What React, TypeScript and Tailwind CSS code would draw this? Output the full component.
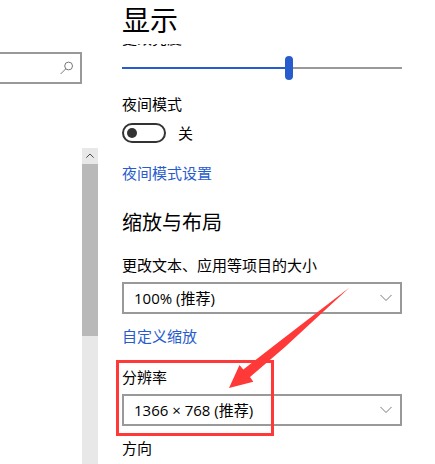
import { useState } from "react";

type SelectFieldProps = {
  id: string;
  label: string;
  options: string[];
  highlighted?: boolean;
};

function SelectField({ id, label, options, highlighted }: SelectFieldProps) {
  return (
    <div className="relative">
      <label htmlFor={id} className="block">
        {label}
      </label>
      <div className="relative mt-[7px]">
        <select
          id={id}
          className="block h-8 w-full appearance-none border-2 border-[#999999] bg-white pl-2.5 pr-8 text-[15px] text-black outline-none"
        >
          {options.map((option) => (
            <option key={option}>{option}</option>
          ))}
        </select>
        <svg
          className="pointer-events-none absolute right-2.5 top-3 h-2 w-3"
          viewBox="0 0 12 8"
          fill="none"
          stroke="#7a7a7a"
        >
          <path d="M0.4 0.9 L6 6.5 L11.6 0.9" />
        </svg>
      </div>
      {highlighted && (
        <>
          <div className="pointer-events-none absolute -bottom-2.5 -left-1.5 -top-[7px] w-[158px] border-[3px] border-[#ff3838]" />
          <svg
            className="pointer-events-none absolute -top-20 left-[107px] h-[102px] w-[122px]"
            viewBox="0 0 122 102"
            fill="#ff3838"
          >
            <path d="M0 101 L10.5 78 L14.3 82.6 L51 54 L120.5 0.6 L56 60 L21 90 L24.3 94.7 Z" />
          </svg>
        </>
      )}
    </div>
  );
}

export default function App() {
  const [brightness, setBrightness] = useState(60);
  const [nightMode, setNightMode] = useState(false);

  return (
    <div className="flex h-screen overflow-hidden bg-white font-['Open_Sans','Noto_Sans_CJK_SC',sans-serif] text-[15px] leading-5 text-black">
      {/* 侧边栏 */}
      <aside className="flex w-[98px] shrink-0 flex-col">
        <div className="relative mr-4 mt-[52px]">
          <input
            type="text"
            aria-label="查找设置"
            className="block h-8 w-full border-2 border-l-0 border-[#999999] bg-white pl-2 pr-6 outline-none"
          />
          <svg
            className="pointer-events-none absolute right-2 top-2 h-4 w-4"
            viewBox="0 0 16 16"
            fill="none"
            stroke="#777777"
          >
            <circle cx="10.6" cy="6" r="3.9" />
            <path d="M7.8 8.8 L2.6 14" />
          </svg>
        </div>

        {/* 滚动条 */}
        <div className="mt-16 flex w-4 grow flex-col self-end bg-[#e8e8e8]">
          <button type="button" aria-label="向上滚动" className="flex h-4 items-center justify-center">
            <svg className="h-2 w-2" viewBox="0 0 8 8" fill="none" stroke="#505050">
              <path d="M0.3 5.7 L4 2 L7.7 5.7" />
            </svg>
          </button>
          <div className="h-[172px] bg-[#b9b9b9]" />
        </div>
      </aside>

      <main className="flex min-w-0 grow flex-col pl-6 pr-[33px]">
        <h1 className="flex h-11 shrink-0 items-center pb-1 text-[28px] leading-9">显示</h1>

        {/* 滚动区域，第一行标签被标题遮住 */}
        <div className="shrink-0">
          <div className="flex h-1 flex-col justify-end overflow-hidden">
            <label htmlFor="brightness" className="shrink-0">
              更改亮度
            </label>
          </div>
          <input
            id="brightness"
            type="range"
            min={0}
            max={100}
            value={brightness}
            onChange={(e) => setBrightness(Number(e.target.value))}
            className="mt-2 block h-6 w-full appearance-none bg-size-[100%_2px] bg-center bg-no-repeat outline-none [&::-webkit-slider-thumb]:h-6 [&::-webkit-slider-thumb]:w-2 [&::-webkit-slider-thumb]:appearance-none [&::-webkit-slider-thumb]:rounded-full [&::-webkit-slider-thumb]:bg-[#285ccd]"
            style={{
              backgroundImage: `linear-gradient(to right, #285ccd ${brightness}%, #999999 ${brightness}%)`,
            }}
          />

          <div className="mt-3.5">夜间模式</div>
          <label className="mt-[9px] flex w-fit items-center gap-3">
            <input
              type="checkbox"
              role="switch"
              aria-label="夜间模式"
              checked={nightMode}
              onChange={(e) => setNightMode(e.target.checked)}
              className="peer sr-only"
            />
            <span className="flex h-5 w-11 items-center rounded-full border-2 border-[#333333] px-[3px] peer-checked:justify-end">
              <span className="h-2.5 w-2.5 rounded-full bg-[#333333]" />
            </span>
            <span>{nightMode ? "开" : "关"}</span>
          </label>
          <a href="#night" className="mt-5 block w-fit text-[#285ccd]">
            夜间模式设置
          </a>

          <h2 className="mt-[26px] text-xl leading-7">缩放与布局</h2>
          <div className="mt-[18px]">
            <SelectField
              id="scale"
              label="更改文本、应用等项目的大小"
              options={["100% (推荐)", "125%", "150%"]}
            />
          </div>
          <a href="#scaling" className="mt-3 block w-fit text-[#285ccd]">
            自定义缩放
          </a>
          <div className="mt-[21px]">
            <SelectField
              id="resolution"
              label="分辨率"
              options={["1366 × 768 (推荐)", "1280 × 720", "1024 × 768"]}
              highlighted
            />
          </div>
          <div className="mt-3">方向</div>
        </div>
      </main>
    </div>
  );
}
